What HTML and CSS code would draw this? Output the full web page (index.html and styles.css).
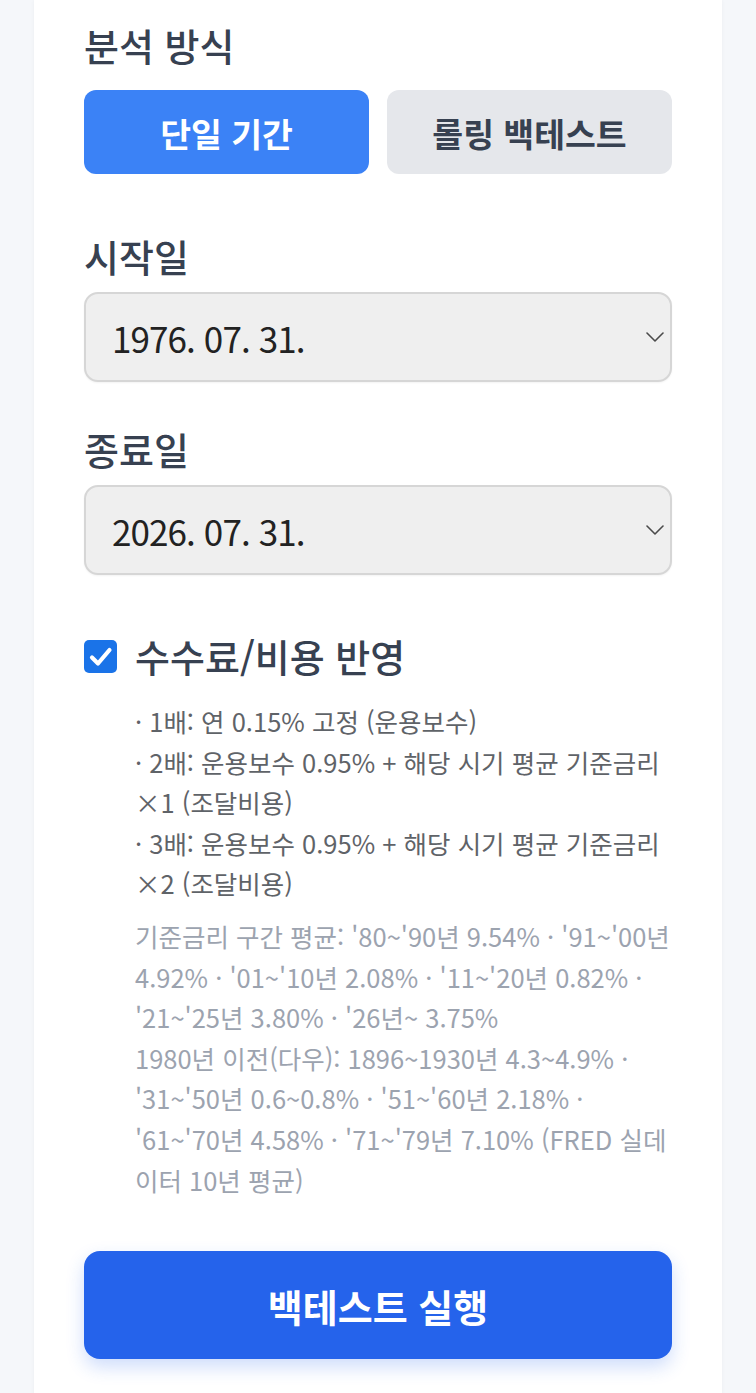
FILE: index.html
```html
<!DOCTYPE html>
<html lang="ko">
<head>
<meta charset="utf-8">
<title>백테스트 설정</title>
<link rel="stylesheet" href="styles.css">
</head>
<body>
<main class="card">
  <h2 class="label">분석 방식</h2>
  <div class="mode-group">
    <button class="mode-btn active">단일 기간</button>
    <button class="mode-btn">롤링 백테스트</button>
  </div>

  <h2 class="label label-start">시작일</h2>
  <div class="date-select">
    <span class="date-value">1976. 07. 31.</span>
    <svg class="chevron" width="18" height="10" viewBox="0 0 18 10"><path d="M1 1 L9 9 L17 1" fill="none" stroke="#4a4a4a" stroke-width="1.6" stroke-linecap="round" stroke-linejoin="round"/></svg>
  </div>

  <h2 class="label label-end">종료일</h2>
  <div class="date-select">
    <span class="date-value">2026. 07. 31.</span>
    <svg class="chevron" width="18" height="10" viewBox="0 0 18 10"><path d="M1 1 L9 9 L17 1" fill="none" stroke="#4a4a4a" stroke-width="1.6" stroke-linecap="round" stroke-linejoin="round"/></svg>
  </div>

  <label class="check-row">
    <span class="checkbox">
      <svg width="33" height="33" viewBox="0 0 33 33"><rect x="0" y="0" width="33" height="33" rx="5" fill="#1a73e8"/><path d="M8 17.5 L14 23.5 L25.5 10" fill="none" stroke="#ffffff" stroke-width="4.2" stroke-linecap="round" stroke-linejoin="round"/></svg>
    </span>
    <span class="check-text">수수료/비용 반영</span>
  </label>

  <div class="notes">
    <p class="fee-list">· 1배: 연 0.15% 고정 (운용보수)<br>· 2배: 운용보수 0.95% + 해당 시기 평균 기준금리<br>×1 (조달비용)<br>· 3배: 운용보수 0.95% + 해당 시기 평균 기준금리<br>×2 (조달비용)</p>
    <p class="rates">기준금리 구간 평균: '80~'90년 9.54% · '91~'00년<br>4.92% · '01~'10년 2.08% · '11~'20년 0.82% ·<br>'21~'25년 3.80% · '26년~ 3.75%<br>1980년 이전(다우): 1896~1930년 4.3~4.9% ·<br>'31~'50년 0.6~0.8% · '51~'60년 2.18% ·<br>'61~'70년 4.58% · '71~'79년 7.10% (FRED 실데<br>이터 10년 평균)</p>
  </div>

  <button class="run-btn">백테스트 실행</button>
</main>
</body>
</html>
```

FILE: styles.css
```css
* { box-sizing: border-box; }

html, body {
  margin: 0;
  padding: 0;
}

body {
  background: #f5f7fa;
  font-family: "Noto Sans CJK KR", "Noto Sans", sans-serif;
  color: #374151;
}

.card {
  margin: 0 34px;
  min-height: 1393px;
  background: #ffffff;
  padding: 22px 50px 40px;
  box-shadow: 0 0 4px rgba(0, 0, 0, 0.04);
}

.label {
  margin: 0;
  font-size: 38px;
  line-height: 46px;
  font-weight: 500;
  color: #374151;
}

.mode-group {
  margin-top: 22px;
  display: grid;
  grid-template-columns: 1fr 1fr;
  gap: 18px;
}

.mode-btn {
  height: 84px;
  border: none;
  border-radius: 12px;
  background: #e5e7eb;
  color: #374151;
  font-family: inherit;
  font-size: 33.5px;
  font-weight: 700;
  padding: 0;
}

.mode-btn.active {
  background: #3b82f6;
  color: #ffffff;
}

.label-start { margin-top: 59px; }
.label-end { margin-top: 44px; }

.date-select {
  margin-top: 13px;
  height: 90px;
  border: 2px solid #d6d6d6;
  border-radius: 14px;
  background: #efefef;
  display: flex;
  align-items: center;
  justify-content: space-between;
  padding: 0 6px 0 26px;
  box-shadow: 0 1px 2px rgba(0, 0, 0, 0.05);
}

.date-value {
  font-size: 35px;
  letter-spacing: -0.9px;
  color: #222222;
}

.chevron { display: block; }

.check-row {
  margin-top: 58px;
  height: 46px;
  display: flex;
  align-items: center;
  gap: 18px;
}

.checkbox {
  width: 33px;
  height: 33px;
  display: block;
}

.checkbox svg { display: block; }

.check-text {
  font-size: 38px;
  line-height: 46px;
  font-weight: 500;
  color: #374151;
}

.notes {
  margin-top: 22px;
  padding-left: 51px;
  font-size: 25.5px;
  line-height: 40.6px;
  white-space: nowrap;
}

.notes p { margin: 0; }

.fee-list { color: #5f6368; }

.rates {
  margin-top: 12px !important;
  color: #9ca3af;
}

.run-btn {
  display: block;
  width: 100%;
  margin-top: 51px;
  height: 108px;
  border: none;
  border-radius: 16px;
  background: #2563eb;
  color: #ffffff;
  font-family: inherit;
  font-size: 38px;
  font-weight: 700;
  box-shadow: 0 8px 18px rgba(37, 99, 235, 0.22);
}
```
